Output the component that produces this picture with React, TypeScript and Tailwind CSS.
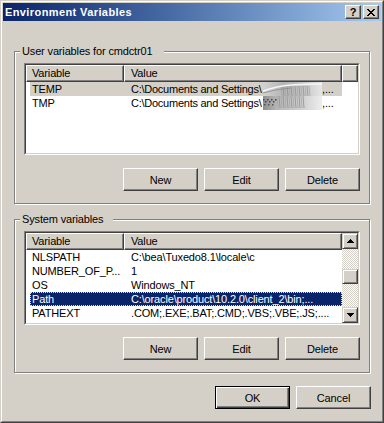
import React from "react";

const raised =
  "border border-t-white border-l-white border-r-[#404040] border-b-[#404040] shadow-[inset_-1px_-1px_0_#808080]";

function Btn({ label, def }: { label: string; def?: boolean }) {
  return (
    <div
      className={
        "w-[75px] h-[23px] flex items-center justify-center bg-[#d4d0c8] " +
        (def
          ? "border border-black shadow-[inset_1px_1px_0_#ffffff,inset_-1px_-1px_0_#404040,inset_-2px_-2px_0_#808080]"
          : raised)
      }
    >
      {label}
    </div>
  );
}

function Blob({ first }: { first?: boolean }) {
  const hatch = first ? [18, 20, 22, 24, 26, 28, 30, 32, 34, 36, 38, 40, 42, 44, 46] : [14, 16, 18, 20, 22, 24, 26, 28, 30, 32, 34, 36, 38, 40];
  return (
    <svg width="59" height="14" viewBox="0 0 59 14" className="block shrink-0">
      <defs>
        <linearGradient id={first ? "g1" : "g2"} x1="0" x2="1" y1="0" y2="0">
          {first ? (
            <>
              <stop offset="0" stopColor="#d2d2d2" />
              <stop offset="0.35" stopColor="#b4b4b4" />
              <stop offset="0.7" stopColor="#c8c8c8" />
              <stop offset="1" stopColor="#e6e6e6" />
            </>
          ) : (
            <>
              <stop offset="0" stopColor="#8e8e8e" />
              <stop offset="0.25" stopColor="#b8b8b8" />
              <stop offset="0.7" stopColor="#d2d2d2" />
              <stop offset="1" stopColor="#eeeeee" />
            </>
          )}
        </linearGradient>
      </defs>
      <rect width="59" height="14" fill={`url(#${first ? "g1" : "g2"})`} />
      {hatch.map((x, i) => (
        <line
          key={x}
          x1={x}
          y1={first ? 4 : 0}
          x2={x + 1}
          y2={first ? 14 : 12}
          stroke={i % 2 ? "#8f8f8f" : "#a6a6a6"}
          strokeWidth="0.8"
        />
      ))}
      {first ? (
        <>
          <path d="M0 9 Q14 4 28 3 T59 2" stroke="#f6f6f6" strokeWidth="1.6" fill="none" />
          <path d="M0 11 Q14 7 28 6" stroke="#8c8c8c" strokeWidth="0.8" fill="none" />
        </>
      ) : (
        <>
          {[0, 2, 4, 6, 8, 10, 12].map((x) => (
            <rect key={x} x={x} y={3 + (x % 4)} width="1.5" height="1.5" fill="#444" />
          ))}
          {[1, 5, 9].map((x) => (
            <rect key={"b" + x} x={x} y={8} width="1.5" height="1.5" fill="#555" />
          ))}
        </>
      )}
    </svg>
  );
}

type Row = { name: string; value: React.ReactNode; sel?: "gray" | "blue" };

function HeaderCell({ label, className }: { label: string; className: string }) {
  return (
    <div
      className={
        "h-[17px] bg-[#d4d0c8] border border-t-white border-l-white border-r-[#404040] border-b-[#404040] shadow-[inset_-1px_-1px_0_#808080] leading-[14px] whitespace-nowrap overflow-hidden " +
        className
      }
    >
      {label}
    </div>
  );
}

function Arrow({ down }: { down?: boolean }) {
  return (
    <div className="w-[16px] h-[16px] bg-[#d4d0c8] border border-t-[#d4d0c8] border-l-[#d4d0c8] border-r-[#404040] border-b-[#404040] shadow-[inset_1px_1px_0_#ffffff,inset_-1px_-1px_0_#808080] flex items-center justify-center">
      <svg width="7" height="4" viewBox="0 0 7 4" className="block" shapeRendering="crispEdges">
        <path
          d={
            down
              ? "M0 0h7v1h-7z M1 1h5v1h-5z M2 2h3v1h-3z M3 3h1v1h-1z"
              : "M3 0h1v1h-1z M2 1h3v1h-3z M1 2h5v1h-5z M0 3h7v1h-7z"
          }
          fill="#000"
        />
      </svg>
    </div>
  );
}

function ListBox({ rows, scroll, heightClass }: { rows: Row[]; scroll?: boolean; heightClass: string }) {
  return (
    <div className={"border border-t-[#808080] border-l-[#808080] border-r-white border-b-white " + heightClass}>
      <div className="h-full border border-t-[#404040] border-l-[#404040] border-r-[#d4d0c8] border-b-[#d4d0c8] bg-white flex">
        <div className="flex-1 flex flex-col min-w-0">
          <div className="flex">
            <HeaderCell label="Variable" className="w-[98px] pl-[5px]" />
            <HeaderCell label="Value" className="w-[218px] pl-[6px]" />
            {!scroll && <HeaderCell label="" className="flex-1" />}
          </div>
          {rows.map((r) => (
            <div
              key={r.name}
              className={
                "ml-[4px] w-[312px] h-[14px] flex leading-[14px] whitespace-nowrap " +
                (r.sel === "gray"
                  ? "bg-[#d4d0c8] text-black"
                  : r.sel === "blue"
                  ? "bg-[#0a246a] text-white outline-1 outline-dotted outline-[#f5db95] -outline-offset-1"
                  : "text-black")
              }
            >
              <div className="w-[94px] pl-[2px] overflow-hidden">{r.name}</div>
              <div className="flex-1 pl-[7px] overflow-hidden flex">{r.value}</div>
            </div>
          ))}
        </div>
        {scroll && (
          <div className="w-[16px] flex flex-col">
            <Arrow />
            <div className="flex-1 flex flex-col bg-[image:repeating-conic-gradient(#d4d0c8_0_25%,#ffffff_0_50%)] bg-size-[2px_2px]">
              <div className="h-[20px]" />
              <div className="h-[15px] bg-[#d4d0c8] border border-t-[#d4d0c8] border-l-[#d4d0c8] border-r-[#404040] border-b-[#404040] shadow-[inset_1px_1px_0_#ffffff,inset_-1px_-1px_0_#808080]" />
            </div>
            <Arrow down />
          </div>
        )}
      </div>
    </div>
  );
}

function Group({
  label,
  labelClass,
  children,
  className,
}: {
  label: string;
  labelClass: string;
  children: React.ReactNode;
  className: string;
}) {
  return (
    <div
      className={
        "relative border border-[#808080] shadow-[inset_1px_1px_0_#ffffff,1px_1px_0_#ffffff] flex flex-col pt-[11px] px-[9px] pb-[12px] " +
        className
      }
    >
      <div className={"absolute top-[-8px] left-[5px] bg-[#d4d0c8] pl-[2px] leading-[14px] whitespace-nowrap " + labelClass}>
        {label}
      </div>
      {children}
    </div>
  );
}

function DocValue({ first }: { first?: boolean }) {
  return (
    <>
      <span className="w-[132px] overflow-hidden shrink-0 tracking-[-0.25px]">C:\Documents and Settings\</span>
      <Blob first={first} />
      <span>,...</span>
    </>
  );
}

export default function App() {
  const userRows: Row[] = [
    { name: "TEMP", value: <DocValue first />, sel: "gray" },
    { name: "TMP", value: <DocValue /> },
  ];
  const sysRows: Row[] = [
    { name: "NLSPATH", value: "C:\\bea\\Tuxedo8.1\\locale\\c" },
    { name: "NUMBER_OF_P...", value: "1" },
    { name: "OS", value: "Windows_NT" },
    { name: "Path", value: "C:\\oracle\\product\\10.2.0\\client_2\\bin;...", sel: "blue" },
    { name: "PATHEXT", value: ".COM;.EXE;.BAT;.CMD;.VBS;.VBE;.JS;...." },
  ];
  return (
    <div className="w-[384px] h-[423px] bg-[#d4d0c8] border border-t-[#d4d0c8] border-l-[#d4d0c8] border-r-[#404040] border-b-[#404040] font-['Liberation_Sans',Arial,sans-serif] text-[11px] leading-[14px] tracking-[-0.15px] text-black select-none">
      <div className="h-full border border-t-white border-l-white border-r-[#808080] border-b-[#808080] p-[1px] flex flex-col">
        <div className="h-[18px] shrink-0 flex items-center bg-linear-to-r from-[#0a246a] to-[#a6caf0] pl-[2px] pr-[2px]">
          <span className="flex-1 font-bold text-white tracking-[0.4px]">Environment Variables</span>
          <div className={"w-[16px] h-[14px] bg-[#d4d0c8] flex items-center justify-center font-bold text-[11px] leading-[10px] " + raised}>
            ?
          </div>
          <div className="w-[2px]" />
          <div className={"w-[16px] h-[14px] bg-[#d4d0c8] flex items-center justify-center " + raised}>
            <svg width="8" height="7" viewBox="0 0 8 7" className="block" shapeRendering="crispEdges">
              <path
                d="M0 0h2v1h-2z M6 0h2v1h-2z M1 1h2v1h-2z M5 1h2v1h-2z M2 2h4v1h-4z M3 3h2v1h-2z M2 4h4v1h-4z M1 5h2v1h-2z M5 5h2v1h-2z M0 6h2v1h-2z M6 6h2v1h-2z"
                fill="#000"
              />
            </svg>
          </div>
        </div>
        <div className="flex-1 flex flex-col">
          <Group label="User variables for cmdctr01" labelClass="w-[144px]" className="mt-[30px] ml-[11px] w-[356px]">
            <ListBox rows={userRows} heightClass="h-[92px]" />
            <div className="mt-[13px] flex justify-end gap-[6px]">
              <Btn label="New" />
              <Btn label="Edit" />
              <Btn label="Delete" />
            </div>
          </Group>
          <Group label="System variables" labelClass="w-[93px]" className="mt-[15px] ml-[11px] w-[356px]">
            <ListBox rows={sysRows} scroll heightClass="h-[94px]" />
            <div className="mt-[12px] flex justify-end gap-[6px]">
              <Btn label="New" />
              <Btn label="Edit" />
              <Btn label="Delete" />
            </div>
          </Group>
          <div className="mt-[13px] pr-[10px] flex justify-end gap-[6px]">
            <Btn label="OK" def />
            <Btn label="Cancel" />
          </div>
        </div>
      </div>
    </div>
  );
}
